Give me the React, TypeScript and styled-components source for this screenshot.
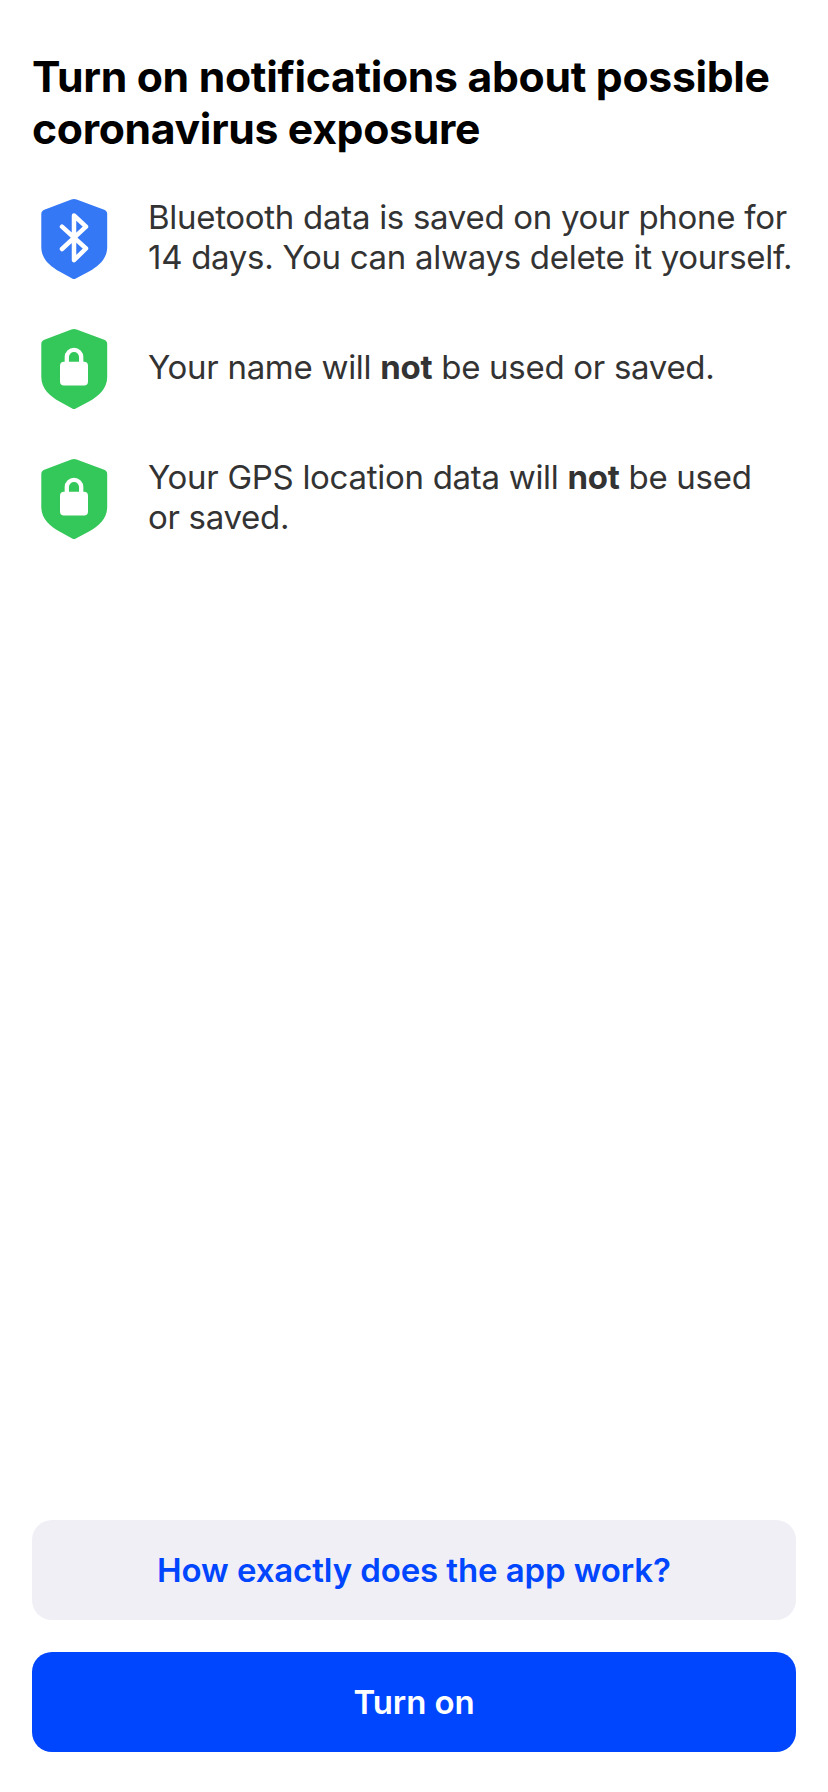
import React from "react";
import styled, { createGlobalStyle } from "styled-components";

const GlobalStyle = createGlobalStyle`
  * { box-sizing: border-box; }
  body { margin: 0; background: #fff; font-family: Inter, "Liberation Sans", sans-serif; }
`;

const Screen = styled.main`
  min-height: 1792px;
  padding: 51px 32px 40px;
  display: flex;
  flex-direction: column;
`;

const Title = styled.h1`
  margin: 0;
  font-size: 42.7px;
  line-height: 52px;
  font-weight: 700;
  letter-spacing: -0.31px;
  color: #000;
  white-space: nowrap;
`;

const List = styled.ul`
  list-style: none;
  margin: 42px 0 0;
  padding: 0;
  display: flex;
  flex-direction: column;
  gap: 46px;
`;

const Item = styled.li`
  display: flex;
  align-items: center;
  height: 84px;
`;

const Shield = styled.svg`
  width: 84px;
  height: 84px;
  flex: none;
`;

const Text = styled.p`
  margin: 0 0 0 32px;
  padding-bottom: 4px;
  font-size: 33px;
  line-height: 40px;
  letter-spacing: -0.29px;
  color: #333;
  white-space: nowrap;
`;

const Strong = styled.strong`
  font-weight: 650;
`;

const Actions = styled.div`
  margin-top: auto;
  display: flex;
  flex-direction: column;
  gap: 32px;
`;

const Button = styled.button<{ $primary?: boolean }>`
  height: 100px;
  border: 0;
  border-radius: 20px;
  background: ${(p) => (p.$primary ? "#0046ff" : "#f0eff5")};
  color: ${(p) => (p.$primary ? "#fff" : "#0046ff")};
  font: 600 33px/40px Inter, "Liberation Sans", sans-serif;
  letter-spacing: -0.1px;
`;

const SHIELD =
  "M39.4 2.6 Q42 1.5 44.6 2.6 L72.2 12.8 Q75.2 14 75.2 17 V50 C75.2 62 66.5 69 57 74.6 L43.8 81.4 Q42 82.4 40.2 81.4 L27.5 74.6 C18 69 9.3 62 9.3 50 V17 Q9.3 14 12.3 12.8 Z";

const BluetoothIcon = () => (
  <Shield viewBox="0 0 84 84">
    <path d={SHIELD} fill="#3478f6" />
    <path
      d="M30 29.7 L54 51.5 L42 63.2 V18.5 L54 29.7 L30 52"
      fill="none"
      stroke="#fff"
      strokeWidth="4.5"
      strokeLinecap="round"
      strokeLinejoin="round"
    />
  </Shield>
);

const LockIcon = () => (
  <Shield viewBox="0 0 84 84">
    <path d={SHIELD} fill="#34c759" />
    <rect x="28" y="34.8" width="28" height="23.8" rx="4" fill="#fff" />
    <path d="M34.8 37 V30 A7.2 7.2 0 0 1 49.2 30 V37" fill="none" stroke="#fff" strokeWidth="4.3" />
  </Shield>
);

export default function App() {
  return (
    <Screen>
      <GlobalStyle />
      <Title>Turn on notifications about possible<br />coronavirus exposure</Title>
      <List>
        <Item>
          <BluetoothIcon />
          <Text>
            Bluetooth data is saved on your phone for<br />
            14 days. You can always delete it yourself.
          </Text>
        </Item>
        <Item>
          <LockIcon />
          <Text>Your name will <Strong>not</Strong> be used or saved.</Text>
        </Item>
        <Item>
          <LockIcon />
          <Text>
            Your GPS location data will <Strong>not</Strong> be used<br />
            or saved.
          </Text>
        </Item>
      </List>
      <Actions>
        <Button>How exactly does the app work?</Button>
        <Button $primary>Turn on</Button>
      </Actions>
    </Screen>
  );
}
